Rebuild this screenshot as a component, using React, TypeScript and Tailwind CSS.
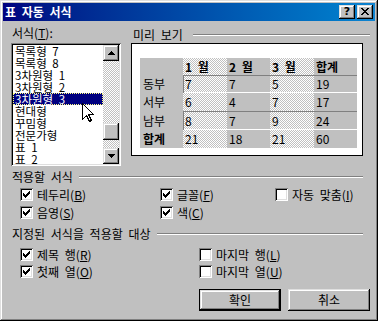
import React from 'react';

const raised = 'shadow-[inset_-1px_-1px_#000,inset_1px_1px_#dfdfdf,inset_-2px_-2px_#808080,inset_2px_2px_#fff]';
const sunken = 'shadow-[inset_1px_1px_#808080,inset_-1px_-1px_#fff,inset_2px_2px_#000,inset_-2px_-2px_#dfdfdf]';
const dither = 'bg-[repeating-conic-gradient(#c0c0c0_0_25%,#fff_0_50%)] bg-[length:2px_2px]';

const formats = ['목록형 7', '목록형 8', '3차원형 1', '3차원형 2', '3차원형 3', '현대형', '꾸밈형', '전문가형', '표 1', '표 2'];

const rows = [
  { label: '동부', vals: ['7', '7', '5', '19'], sunk: true },
  { label: '서부', vals: ['6', '4', '7', '17'], sunk: false },
  { label: '남부', vals: ['8', '7', '9', '24'], sunk: true },
  { label: '합계', vals: ['21', '18', '21', '60'], sunk: false, bold: true },
];

const checkPx = [
  [6, 0], [5, 1], [6, 1], [0, 2], [4, 2], [5, 2], [6, 2],
  [0, 3], [1, 3], [3, 3], [4, 3], [5, 3],
  [0, 4], [1, 4], [2, 4], [3, 4], [4, 4],
  [1, 5], [2, 5], [3, 5], [2, 6],
];

function Check({ checked }: { checked: boolean }) {
  return (
    <span className={`relative block w-[13px] h-[13px] bg-white shrink-0 ${sunken}`}>
      {checked && (
        <svg className="absolute left-[3px] top-[3px]" width="7" height="7" viewBox="0 0 7 7" shapeRendering="crispEdges">
          {checkPx.map(([x, y]) => (
            <rect key={`${x}-${y}`} x={x} y={y} width="1" height="1" fill="#000" />
          ))}
        </svg>
      )}
    </span>
  );
}

function Option({ checked, children, width }: { checked: boolean; children: React.ReactNode; width?: string }) {
  return (
    <div className={`flex items-center h-[13px] ${width ?? ''}`}>
      <Check checked={checked} />
      <span className="ml-[4px] leading-[13px] whitespace-nowrap">{children}</span>
    </div>
  );
}

function Section({ label }: { label: string }) {
  return (
    <div className="flex items-center h-[12px] ml-[1px] mr-[7px]">
      <span className="leading-[12px] whitespace-nowrap">{label}</span>
      <div className="flex-1 ml-[6px] h-[2px] border-t border-t-[#808080] border-b border-b-white" />
    </div>
  );
}

function Arrow({ up }: { up: boolean }) {
  return (
    <svg width="7" height="4" viewBox="0 0 7 4" shapeRendering="crispEdges">
      <path d={up ? 'M3 0h1v1h1v1h1v1h1v1H0V3h1V2h1V1h1z' : 'M0 0h7v1H6v1H5v1H4v1H3V3H2V2H1V1H0z'} fill="#000" />
    </svg>
  );
}

export default function App() {
  const cols = ['w-[43px]', 'w-[44px]', 'w-[43px]', 'w-[44px]', 'w-[43px]'];
  const heights = ['h-[18px]', 'h-[18px]', 'h-[19px]', 'h-[18px]'];

  return (
    <div
      className={`relative w-[378px] h-[321px] bg-[#c0c0c0] p-[3px] text-[12px] text-black [word-spacing:3px] font-['Noto_Sans_CJK_KR',sans-serif] overflow-hidden ${raised}`}
    >
      {/* title bar */}
      <div className="flex items-center h-[18px] bg-linear-to-r from-[#000080] to-[#1084d0]">
        <span className="pl-[2px] font-bold text-white leading-[18px]">표 자동 서식</span>
        <div className="ml-auto flex items-center gap-[2px] mr-[2px]">
          <div className={`flex items-center justify-center w-[16px] h-[14px] bg-[#c0c0c0] ${raised}`}>
            <span className="font-bold text-[11px] leading-[11px] font-['DejaVu_Sans',sans-serif] mt-[-1px]">?</span>
          </div>
          <div className={`flex items-center justify-center w-[16px] h-[14px] bg-[#c0c0c0] ${raised}`}>
            <svg width="8" height="7" viewBox="0 0 8 7" shapeRendering="crispEdges" className="mt-[-1px]">
              <path d="M0 0h2v1h1v1h2V1h1V0h2v1H7v1H6v1H5v1h1v1h1v1h1v1H6V6H5V5H3v1H2v1H0V6h1V5h1V4h1V3H2V2H1V1H0z" fill="#000" />
            </svg>
          </div>
        </div>
      </div>

      <div className="flex flex-col pl-[8px] pr-[5px] pt-[5px]">
        {/* top area */}
        <div className="flex">
          <div className="w-[110px] flex flex-col">
            <div className="h-[17px] leading-[14px] pl-[1px]">
              서식(<u>T</u>):
            </div>
            <div className={`flex h-[123px] p-[2px] bg-white ${sunken}`}>
              <div className="flex-1 overflow-hidden bg-white text-[11.5px]">
                {formats.map((f, i) =>
                  i === 4 ? (
                    <div key={f} className="h-[12px] leading-[10px] pl-[1px] bg-[#000080] text-white border border-dotted border-[#ffff80] whitespace-nowrap">
                      {f}
                    </div>
                  ) : (
                    <div key={f} className="h-[12px] leading-[12px] pl-[2px] whitespace-nowrap">
                      {f}
                    </div>
                  )
                )}
              </div>
              <div className="w-[16px] flex flex-col">
                <div className={`h-[16px] flex items-center justify-center bg-[#c0c0c0] ${raised}`}>
                  <Arrow up />
                </div>
                <div className={`h-[62px] ${dither}`} />
                <div className={`h-[17px] bg-[#c0c0c0] ${raised}`} />
                <div className={`flex-1 ${dither}`} />
                <div className={`h-[16px] flex items-center justify-center bg-[#c0c0c0] ${raised}`}>
                  <Arrow up={false} />
                </div>
              </div>
            </div>
          </div>

          <div className="ml-[10px] w-[239px] flex flex-col">
            <div className="flex items-center h-[17px]">
              <span className="pl-[2px] leading-[14px] whitespace-nowrap">미리 보기</span>
              <div className="flex-1 ml-[10px] h-[2px] border-t border-t-[#808080] border-b border-b-white" />
            </div>
            <div className="w-[232px] h-[113px] border border-black bg-white pl-[8px] pt-[14px]">
              <div className="flex flex-col w-[217px] bg-[#c0c0c0]">
                <div className="flex h-[17px] font-bold">
                  <div className={cols[0]} />
                  {['1 월', '2 월', '3 월', '합계'].map((h, i) => (
                    <div key={h} className={`${cols[i + 1]} pl-[2px] leading-[17px] ${i % 2 === 0 ? dither : ''}`}>
                      {h}
                    </div>
                  ))}
                </div>
                {rows.map((r, ri) => (
                  <div key={r.label} className={`flex ${heights[ri]}`}>
                    <div className={`${cols[0]} pl-[3px] flex items-center ${r.bold ? 'font-bold' : ''}`}>{r.label}</div>
                    {r.vals.map((v, i) => (
                      <div
                        key={i}
                        className={`${cols[i + 1]} pl-[2px] flex items-center ${i % 2 === 0 ? dither : ''} ${
                          r.sunk
                            ? i === 0
                              ? 'shadow-[inset_1px_1px_#808080,inset_0_-1px_#fff]'
                              : 'shadow-[inset_0_1px_#808080,inset_0_-1px_#fff]'
                            : ''
                        }`}
                      >
                        {v}
                      </div>
                    ))}
                  </div>
                ))}
              </div>
            </div>
          </div>
        </div>

        {/* options to apply */}
        <div className="mt-[5px]">
          <Section label="적용할 서식" />
        </div>
        <div className="flex flex-col gap-[5px] mt-[5px] ml-[9px]">
          <div className="flex">
            <Option checked width="w-[140px]">
              테두리(<u>B</u>)
            </Option>
            <Option checked width="w-[115px]">
              글꼴(<u>F</u>)
            </Option>
            <Option checked={false}>
              자동 맞춤(<u>I</u>)
            </Option>
          </div>
          <div className="flex">
            <Option checked width="w-[140px]">
              음영(<u>S</u>)
            </Option>
            <Option checked width="w-[115px]">
              색(<u>C</u>)
            </Option>
          </div>
        </div>

        <div className="mt-[9px]">
          <Section label="지정된 서식을 적용할 대상" />
        </div>
        <div className="flex flex-col gap-[4px] mt-[8px] ml-[9px]">
          <div className="flex">
            <Option checked width="w-[179px]">
              제목 행(<u>R</u>)
            </Option>
            <Option checked={false}>
              마지막 행(<u>L</u>)
            </Option>
          </div>
          <div className="flex">
            <Option checked width="w-[179px]">
              첫째 열(<u>O</u>)
            </Option>
            <Option checked={false}>
              마지막 열(<u>U</u>)
            </Option>
          </div>
        </div>

        <div className="flex justify-end gap-[7px] mt-[11px]">
          <div className="w-[82px] h-[22px] border border-black">
            <div className={`w-full h-full flex items-center justify-center bg-[#c0c0c0] ${raised}`}>확인</div>
          </div>
          <div className={`w-[82px] h-[22px] flex items-center justify-center bg-[#c0c0c0] ${raised}`}>취소</div>
        </div>
      </div>

      {/* mouse pointer */}
      <svg className="absolute left-[82px] top-[103px] pointer-events-none" width="13" height="20" viewBox="0 0 13 20" shapeRendering="crispEdges">
        <path d="M0.5 0.5 L0.5 16.5 L4.5 12.5 L7.5 18.5 L9.5 17.5 L6.5 11.5 L11.5 11.5 Z" fill="#fff" stroke="#000" strokeWidth="1" />
      </svg>
    </div>
  );
}
